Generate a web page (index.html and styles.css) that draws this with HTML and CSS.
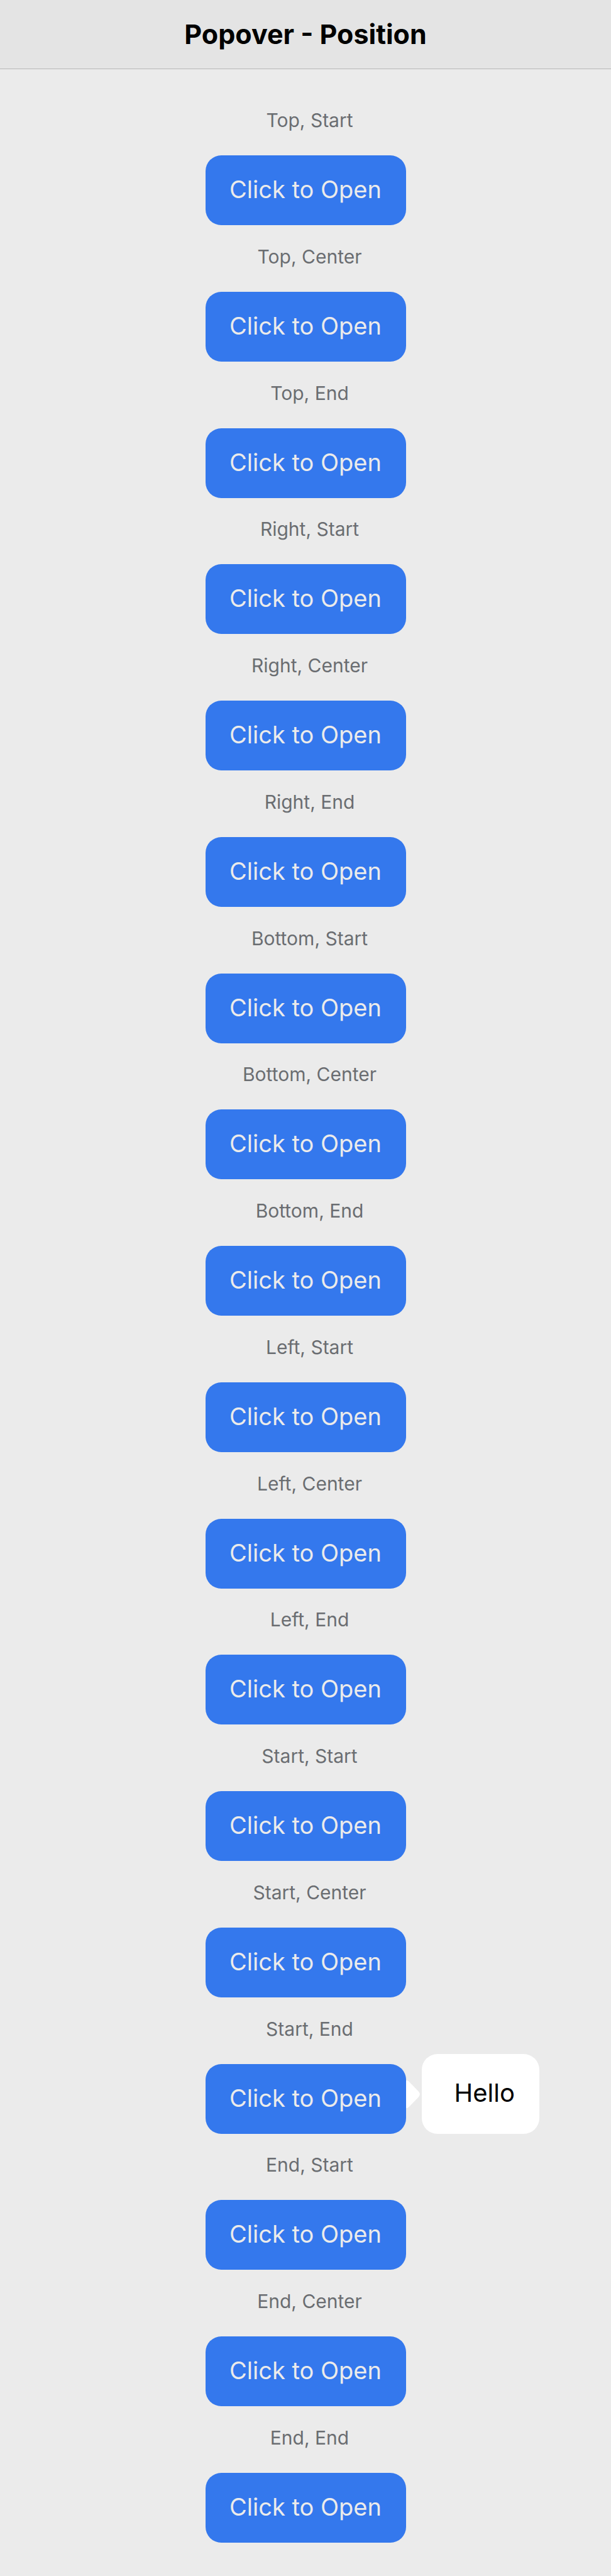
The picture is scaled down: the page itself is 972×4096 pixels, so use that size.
FILE: index.html
```html
<!DOCTYPE html>
<html lang="en">
<head>
<meta charset="utf-8">
<meta name="viewport" content="width=device-width, initial-scale=1">
<title>Popover - Position</title>
<link rel="stylesheet" href="styles.css">
</head>
<body>
<header class="header"><h1 class="title">Popover - Position</h1></header>
<main class="grid">
  <section class="cell"><h2 class="label" id="l1">Top, Start</h2><button class="button" type="button" aria-describedby="l1">Click to Open</button></section>
  <section class="cell"><h2 class="label" id="l2">Top, Center</h2><button class="button" type="button" aria-describedby="l2">Click to Open</button></section>
  <section class="cell"><h2 class="label" id="l3">Top, End</h2><button class="button" type="button" aria-describedby="l3">Click to Open</button></section>
  <section class="cell"><h2 class="label" id="l4">Right, Start</h2><button class="button" type="button" aria-describedby="l4">Click to Open</button></section>
  <section class="cell"><h2 class="label" id="l5">Right, Center</h2><button class="button" type="button" aria-describedby="l5">Click to Open</button></section>
  <section class="cell"><h2 class="label" id="l6">Right, End</h2><button class="button" type="button" aria-describedby="l6">Click to Open</button></section>
  <section class="cell"><h2 class="label" id="l7">Bottom, Start</h2><button class="button" type="button" aria-describedby="l7">Click to Open</button></section>
  <section class="cell"><h2 class="label" id="l8">Bottom, Center</h2><button class="button" type="button" aria-describedby="l8">Click to Open</button></section>
  <section class="cell"><h2 class="label" id="l9">Bottom, End</h2><button class="button" type="button" aria-describedby="l9">Click to Open</button></section>
  <section class="cell"><h2 class="label" id="l10">Left, Start</h2><button class="button" type="button" aria-describedby="l10">Click to Open</button></section>
  <section class="cell"><h2 class="label" id="l11">Left, Center</h2><button class="button" type="button" aria-describedby="l11">Click to Open</button></section>
  <section class="cell"><h2 class="label" id="l12">Left, End</h2><button class="button" type="button" aria-describedby="l12">Click to Open</button></section>
  <section class="cell"><h2 class="label" id="l13">Start, Start</h2><button class="button" type="button" aria-describedby="l13">Click to Open</button></section>
  <section class="cell"><h2 class="label" id="l14">Start, Center</h2><button class="button" type="button" aria-describedby="l14">Click to Open</button></section>
  <section class="cell">
    <h2 class="label" id="l15">Start, End</h2>
    <div class="anchor">
      <button class="button" type="button" aria-describedby="l15" aria-expanded="true">Click to Open</button>
      <div class="popover" role="dialog" aria-label="Hello">
        <svg class="arrow" viewBox="0 0 22 44" aria-hidden="true"><path d="M0 0C2 0 3.500 .8 5 2.200L19.600 17.200Q24 22 19.600 26.800L5 41.800C3.500 43.200 2 44 0 44Z"/></svg>
        <p class="message">Hello</p>
      </div>
    </div>
  </section>
  <section class="cell"><h2 class="label" id="l16">End, Start</h2><button class="button" type="button" aria-describedby="l16">Click to Open</button></section>
  <section class="cell"><h2 class="label" id="l17">End, Center</h2><button class="button" type="button" aria-describedby="l17">Click to Open</button></section>
  <section class="cell"><h2 class="label" id="l18">End, End</h2><button class="button" type="button" aria-describedby="l18">Click to Open</button></section>
</main>
</body>
</html>
```
FILE: styles.css
```css
* {
  box-sizing: border-box;
}

body {
  display: flex;
  flex-direction: column;
  min-height: 100vh;
  margin: 0;
  background: #ebebeb;
  font-family: Inter, "Liberation Sans", sans-serif;
}

.header {
  padding: 29px 24px 30px;
  border-bottom: 1px solid #b5b5b5;
  background: #e4e4e4;
  text-align: center;
}

.title {
  margin: 0;
  color: #000;
  font-size: 43px;
  font-weight: 700;
  line-height: 50px;
}

.grid {
  display: flex;
  flex: 1;
  flex-direction: column;
  justify-content: space-between;
  gap: 24px;
  padding: 61px 0 53px;
}

.cell {
  display: flex;
  flex-direction: column;
  align-items: center;
  gap: 36px;
}

.label {
  margin: 0;
  padding-left: 13px;
  color: #6a6d71;
  font-size: 30px;
  font-weight: 400;
  line-height: 40px;
}

.button {
  min-width: 319px;
  padding: 30px 36px 33px;
  border: 0;
  border-radius: 25px;
  background: #3478ed;
  color: #ebebeb;
  font: inherit;
  font-size: 38px;
  line-height: 48px;
}

.anchor {
  display: flex;
  position: relative;
}

.popover {
  position: absolute;
  bottom: 0;
  left: 100%;
  margin-left: 25px;
  padding: 38px 39px 41px 52px;
  border-radius: 25px;
  background: #fff;
}

.arrow {
  position: absolute;
  top: 42px;
  left: -25px;
  width: 22px;
  height: 44px;
  fill: #fff;
}

.message {
  margin: 0;
  color: #000;
  font-size: 40px;
  line-height: 48px;
}
```
